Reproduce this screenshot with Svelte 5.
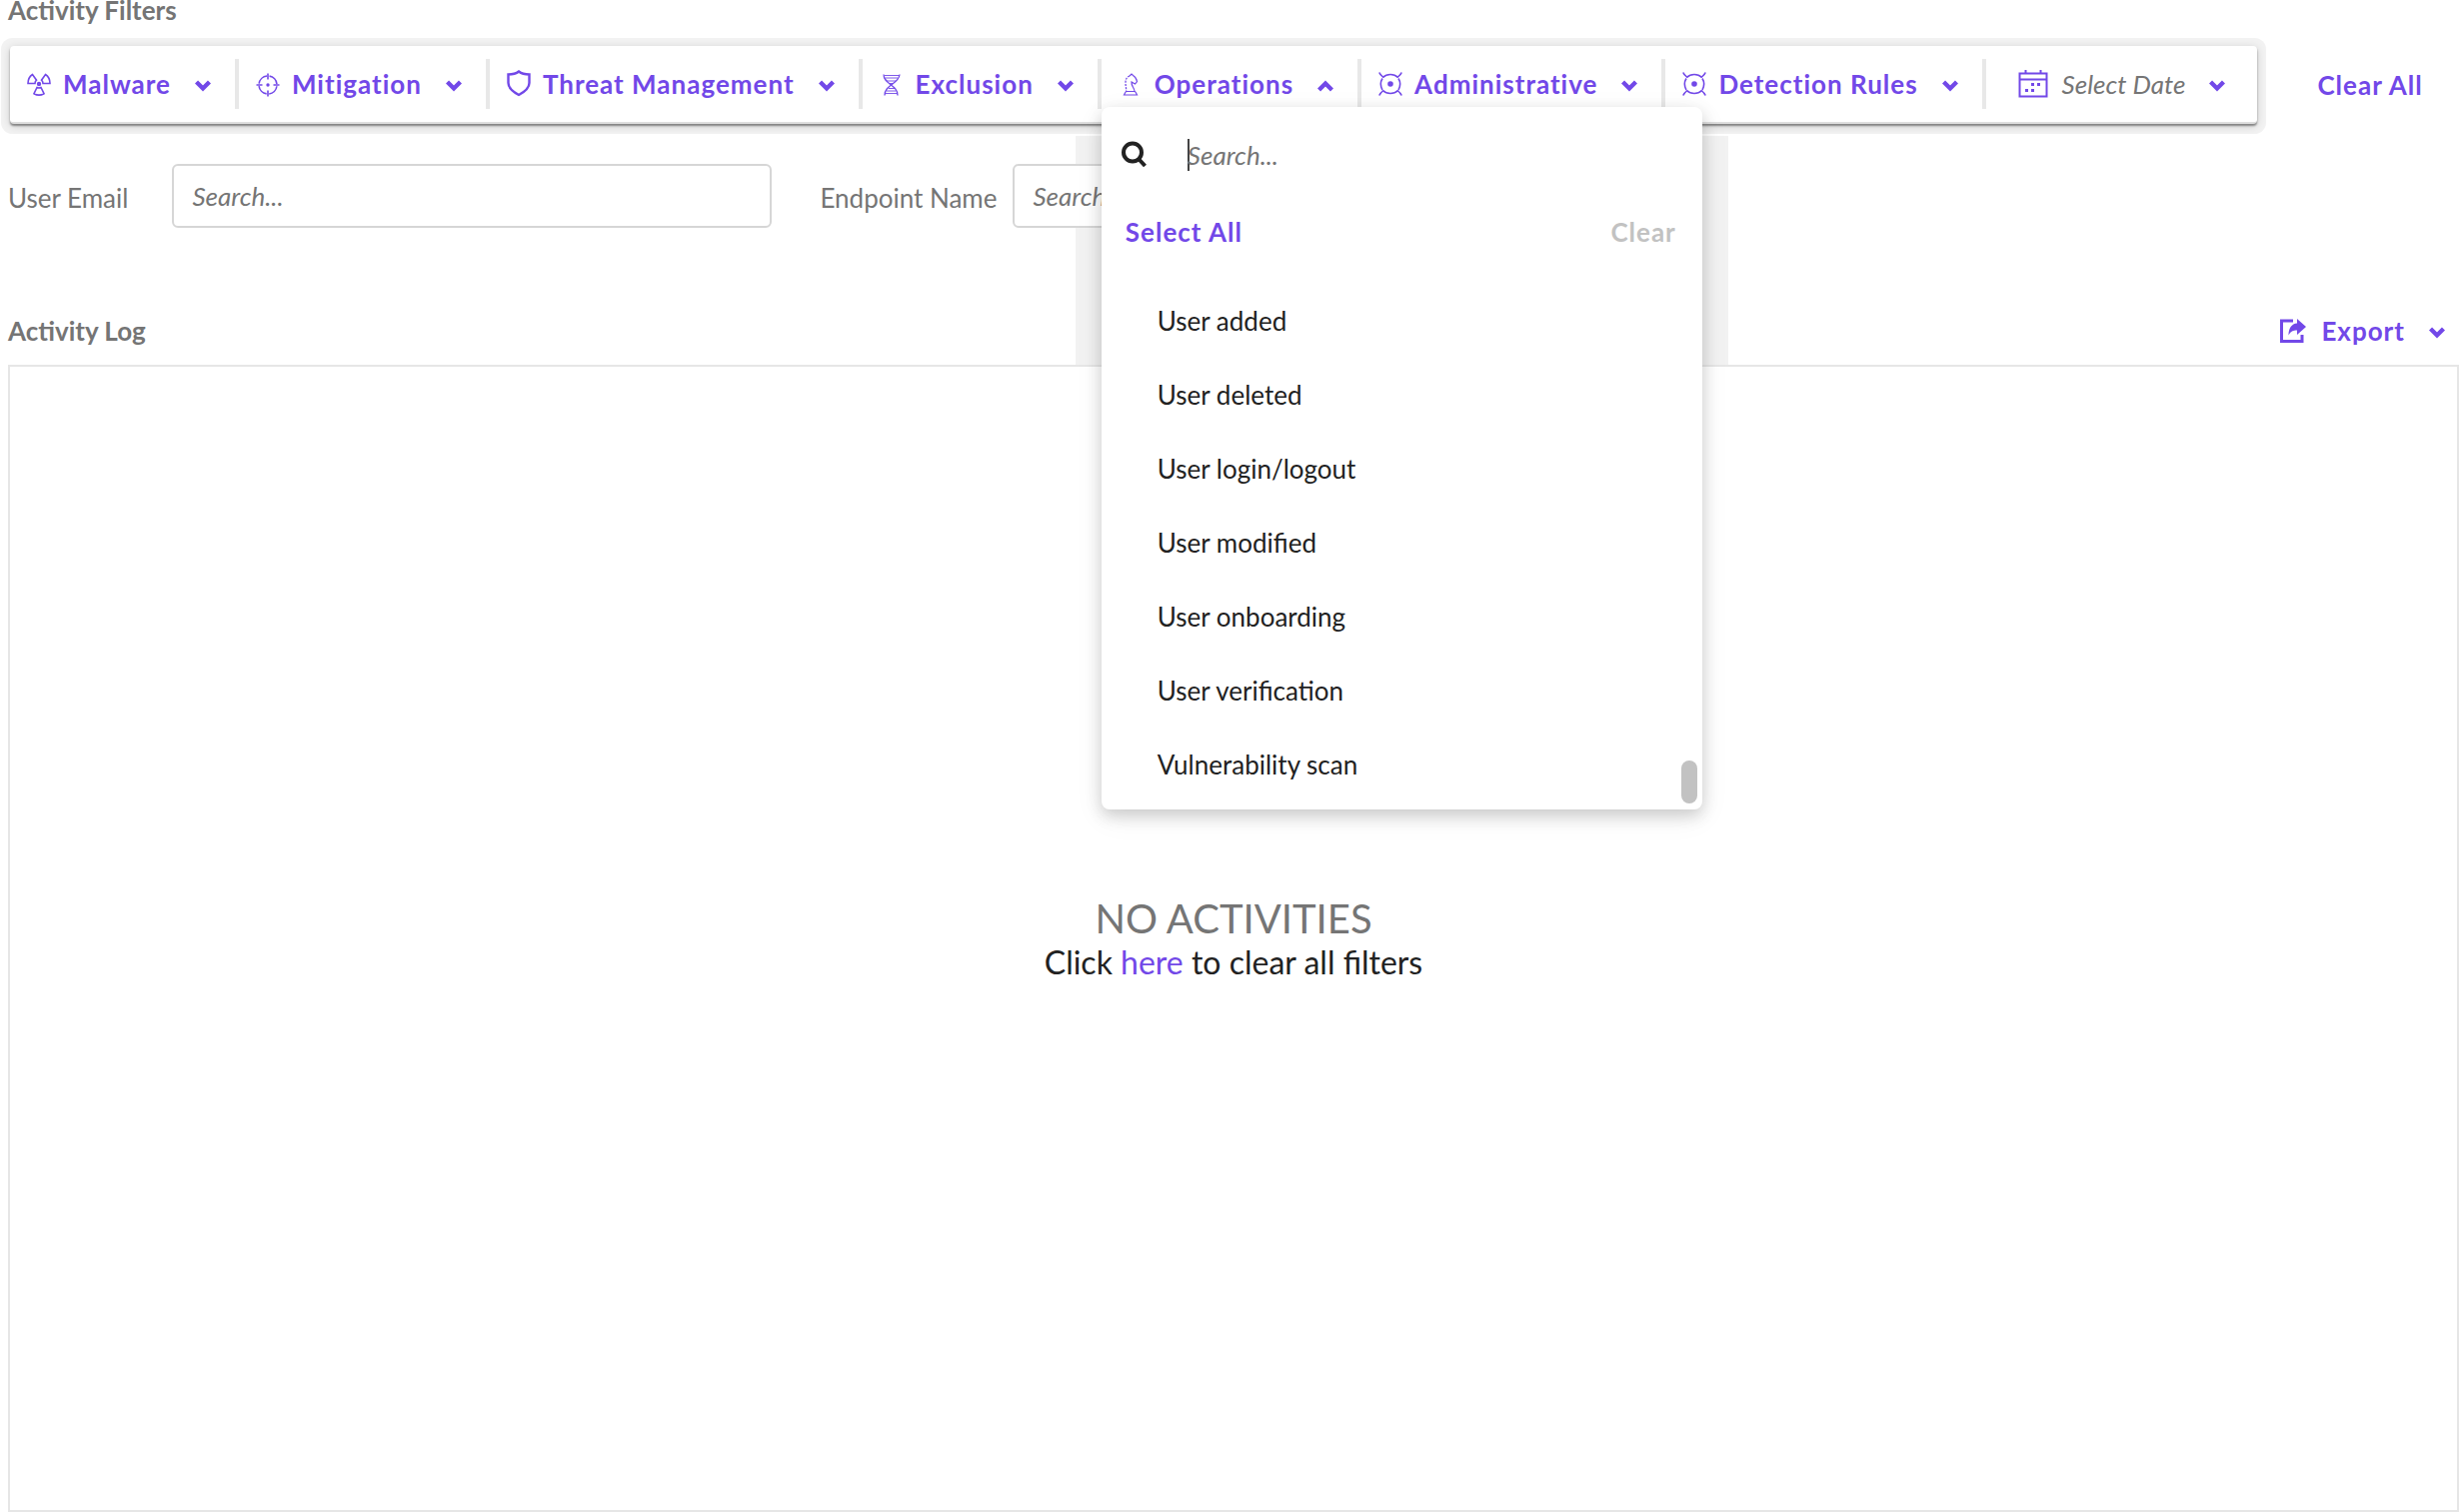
<script lang="ts">
	interface Filter {
		label: string;
		icon: string;
		open?: boolean;
	}

	const filters: Filter[] = [
		{ label: 'Malware', icon: 'hazard' },
		{ label: 'Mitigation', icon: 'target' },
		{ label: 'Threat Management', icon: 'shield' },
		{ label: 'Exclusion', icon: 'dna' },
		{ label: 'Operations', icon: 'knight', open: true },
		{ label: 'Administrative', icon: 'bug' },
		{ label: 'Detection Rules', icon: 'bug' }
	];

	const options = [
		'User added',
		'User deleted',
		'User login/logout',
		'User modified',
		'User onboarding',
		'User verification',
		'Vulnerability scan'
	];

	let query = $state('');
	let email = $state('');
	let endpoint = $state('');
</script>

{#snippet chevron(up: boolean)}
	<svg class="chevron" width="16" height="12" viewBox="0 0 16 12" aria-hidden="true">
		<path d={up ? 'M1.5 10 8 3.500l6.500 6.500' : 'M1.5 2 8 8.500l6.500-6.500'} />
	</svg>
{/snippet}

{#snippet glyph(name: string)}
	<svg class="icon" width="24" height="28" viewBox="0 0 24 28" aria-hidden="true">
		{#if name === 'hazard'}
			<circle cx="12" cy="14" r="2.2" fill="currentColor" stroke="none" />
			<path d="M5.5 4.5C2.500 6.500 1 9.500 1 13.500h7c0-1.500.6-2.600 1.500-3.300z" />
			<path d="M18.500 4.500C21.500 6.500 23 9.500 23 13.500h-7c0-1.500-.6-2.600-1.500-3.300z" />
			<path d="M10 17.500 7 23.700c3 1.700 7 1.700 10 0l-3-6.200c-1.300.7-2.700.7-4 0z" />
		{:else if name === 'target'}
			<circle cx="12" cy="15" r="9" stroke-dasharray="11.500 2.640" stroke-dashoffset="-1.300" />
			<circle cx="12" cy="15" r="1.700" fill="currentColor" stroke="none" />
			<path d="M12 3.500v6M12 20.500v6M.5 15h6M17.500 15h6" />
		{:else if name === 'shield'}
			<path
				stroke-width="2.400"
				d="M12 1.500C9.500 3.500 5.500 4.500 1.500 4.500V13c0 5 4 8.500 10.500 12C18.500 21.500 22.500 18 22.500 13V4.500C18.500 4.500 14.500 3.500 12 1.500z"
			/>
		{:else if name === 'dna'}
			<path stroke-width="1.300" d="M4 4.500c0 10 14 10 14 21M20 4.500c-1 10-15 10-15 21" />
			<path stroke-width="0.900" d="M5 5.500h14M5.500 8h12.500M7 11h9M9 13.500h5M9 18.500h6M7 21h9M6 23.500h11.500" />
		{:else if name === 'knight'}
			<path
				stroke-width="1.200"
				d="M7.500 21.500h9l1 1.500 1 2h-13l1-2zM16 21.500c0-4-3.500-5-3-9.500l3.500 2 2-2.500c-.5-3-1.500-4.500-4-6L13 4l-2 2"
			/>
			<path stroke-width="1.300" stroke-dasharray="2 1.200" d="M11 6C7.500 7.500 7 10 7 13s1 6 .5 8.500" />
		{:else}
			<path d="M4.500 7.500C6.500 5.500 9 4.500 12 4.500s5.500 1 7.500 3M4.500 20.500c2 2 4.500 3 7.500 3s5.500-1 7.500-3" />
			<path d="M4 8.500C1.800 12 1.800 16 4 20M20 8.500c2.200 3.500 2.200 7.500 0 11.500" />
			<circle cx="12" cy="14" r="2.800" fill="currentColor" stroke="none" />
			<path d="M.8 2.500c.5 1.500 1.700 3 4.200 5M23.200 2.500c-.5 1.500-1.700 3-4.200 5M.8 25.500c.5-1.500 1.700-3 4.200-5M23.200 25.500c-.5-1.500-1.700-3-4.200-5" />
		{/if}
	</svg>
{/snippet}

<main>
	<h2>Activity Filters</h2>

	<div class="filter-row">
		<div class="filters">
			{#each filters as filter}
				<div class="filter" class:open={filter.open}>
					<button class="trigger" aria-expanded={!!filter.open}>
						{@render glyph(filter.icon)}
						<span>{filter.label}</span>
						{@render chevron(!!filter.open)}
					</button>
					{#if filter.open}
						<div class="menu">
							<label class="menu-search">
								<svg width="26" height="28" viewBox="0 0 26 28" aria-hidden="true">
									<circle cx="11" cy="11.500" r="9" />
									<path d="m17.500 18.500 6 6.500" />
								</svg>
								<span class="caret"></span>
								<input type="text" placeholder="Search..." aria-label="Search operations" bind:value={query} />
							</label>
							<div class="menu-actions">
								<button>Select All</button>
								<button disabled>Clear</button>
							</div>
							<ul>
								{#each options as option}
									<li><button>{option}</button></li>
								{/each}
							</ul>
							<div class="thumb"></div>
						</div>
					{/if}
				</div>
			{/each}
			<button class="date">
				<svg class="calendar" width="30" height="30" viewBox="0 0 30 30" aria-hidden="true">
					<path d="M1.500 4.500h27v23h-27zM1.500 10.500h27" />
					<path d="M7.500 1v4M22.500 1v4" />
					<path class="dots" d="M13 15.500h3M19 15.500h3M7 21.500h3M13 21.500h3" />
				</svg>
				<span>Select Date</span>
				{@render chevron(false)}
			</button>
		</div>
		<button class="clear-all">Clear All</button>
	</div>

	<div class="fields">
		<label for="email">User Email</label>
		<input id="email" type="text" placeholder="Search..." bind:value={email} />
		<label for="endpoint">Endpoint Name</label>
		<input id="endpoint" type="text" placeholder="Search..." bind:value={endpoint} />
	</div>

	<div class="log-head">
		<h2>Activity Log</h2>
		<button class="export">
			<svg width="28" height="26" viewBox="0 0 28 26" aria-hidden="true">
				<path class="frame" d="M14 3H2.500v20.500h20.500V17" />
				<path class="arrow" d="M18 1l9 8-9 8v-4.500c-4 0-6.500 1-8.500 5 0-7 3-11.500 8.500-12z" />
			</svg>
			<span>Export</span>
			{@render chevron(false)}
		</button>
	</div>

	<section class="log">
		<h3>NO ACTIVITIES</h3>
		<p>Click <a href="#clear">here</a> to clear all filters</p>
	</section>
</main>

<style>
	:global(body) {
		margin: 0;
		background: #fff;
	}

	main {
		isolation: isolate;
		box-sizing: border-box;
		min-height: 100vh;
		display: flex;
		flex-direction: column;
		padding-left: 8px;
		font-family: Lato, sans-serif;
		font-size: 26px;
		line-height: 32px;
		color: #222;
	}

	h2 {
		margin: 0;
		font-size: 26px;
		line-height: 32px;
		font-weight: 700;
		color: #757575;
	}

	main > h2 {
		line-height: 20px;
	}

	button {
		display: flex;
		align-items: center;
		padding: 0;
		border: 0;
		background: none;
		font: inherit;
		font-weight: 700;
		letter-spacing: 1px;
		color: #7248e8;
		white-space: nowrap;
		cursor: pointer;
	}

	svg {
		flex: none;
		fill: none;
		stroke: currentColor;
		stroke-width: 2;
	}

	.icon {
		stroke-width: 1.6;
	}

	.chevron {
		margin: 4px 0 0 24px;
		stroke-width: 4.4;
	}

	.filter-row {
		display: flex;
		align-items: center;
		margin-top: 26px;
	}

	.filters {
		display: flex;
		align-items: center;
		margin-left: 2px;
		height: 76px;
		border-bottom: 2px solid #dedede;
		border-radius: 4px;
		background: #fff;
		box-shadow:
			0 2px 2px rgba(0, 0, 0, 0.4),
			0 2px 8px rgba(0, 0, 0, 0.16),
			0 1px 0 9px #f2f2f2;
	}

	.filter {
		position: relative;
		border-right: 4px solid #e8e8e8;
	}

	.trigger {
		height: 50px;
		padding: 0 24px 0 17px;
	}

	.trigger span {
		margin-left: 12px;
	}

	.date {
		height: 50px;
		padding: 0 32px;
		font-weight: 400;
		font-style: italic;
		letter-spacing: 0;
	}

	.date span {
		margin-left: 14px;
		color: #757575;
	}

	.calendar .dots {
		stroke-width: 3;
	}

	.clear-all {
		margin-left: 60px;
	}

	/* soft band beside the open menu, behind the fields and the log */
	.open::before {
		content: '';
		position: absolute;
		z-index: -1;
		top: 77px;
		left: -26px;
		width: 653px;
		height: 240px;
		background: #f2f2f2;
	}

	.menu {
		position: absolute;
		z-index: 2;
		top: 48px;
		left: 0;
		box-sizing: border-box;
		width: 601px;
		padding: 32px 26px 0 20px;
		border-radius: 8px;
		background: #fff;
		box-shadow:
			0 6px 16px rgba(0, 0, 0, 0.18),
			0 8px 32px rgba(0, 0, 0, 0.06);
	}

	.menu-search {
		display: flex;
		align-items: center;
	}

	.menu-search svg {
		stroke-width: 4;
	}

	.caret {
		width: 2px;
		height: 32px;
		margin-left: 40px;
		background: #444;
	}

	input {
		box-sizing: border-box;
		padding: 0;
		border: 0;
		outline: 0;
		background: #fff;
		font: inherit;
		color: #222;
	}

	input::placeholder {
		font-style: italic;
		color: #757575;
		opacity: 1;
	}

	.menu-search input {
		flex: 1;
		min-width: 0;
		margin-left: -2px;
		height: 32px;
		background: transparent;
	}

	.menu-actions {
		display: flex;
		justify-content: space-between;
		margin: 45px 0 0 4px;
	}

	.menu-actions button:disabled {
		color: #c2c2c2;
	}

	ul {
		margin: 36px 0 0;
		padding: 0 0 8px;
		list-style: none;
	}

	li button {
		width: 100%;
		height: 74px;
		padding-left: 36px;
		font-weight: 400;
		letter-spacing: 0;
		color: #222;
	}

	.thumb {
		position: absolute;
		right: 5px;
		bottom: 6px;
		width: 16px;
		height: 43px;
		border-radius: 8px;
		background: #c2c2c2;
	}

	.fields {
		display: flex;
		align-items: center;
		margin-top: 40px;
		color: #757575;
	}

	.fields label {
		padding-top: 4px;
	}

	.fields input {
		width: 600px;
		height: 64px;
		margin-right: 48px;
		padding: 0 18px;
		border: 2px solid #d6d6d6;
		border-radius: 6px;
	}

	#email {
		margin-left: 44px;
	}

	#endpoint {
		margin-left: 16px;
	}

	.log-head {
		display: flex;
		align-items: center;
		justify-content: space-between;
		margin: 87px 14px 18px 0;
	}

	.export span {
		margin-left: 14px;
	}

	.frame {
		stroke-width: 3;
	}

	.arrow {
		fill: currentColor;
		stroke: none;
	}

	.log {
		flex: 1;
		display: flex;
		flex-direction: column;
		align-items: center;
		justify-content: center;
		border: 2px solid #e6e6e6;
		background: #fff;
	}

	h3 {
		margin: 0;
		font-size: 40px;
		line-height: 48px;
		font-weight: 400;
		color: #757575;
	}

	p {
		margin: 0;
		font-size: 32px;
		line-height: 40px;
	}

	a {
		color: #7248e8;
		text-decoration: none;
	}
</style>
